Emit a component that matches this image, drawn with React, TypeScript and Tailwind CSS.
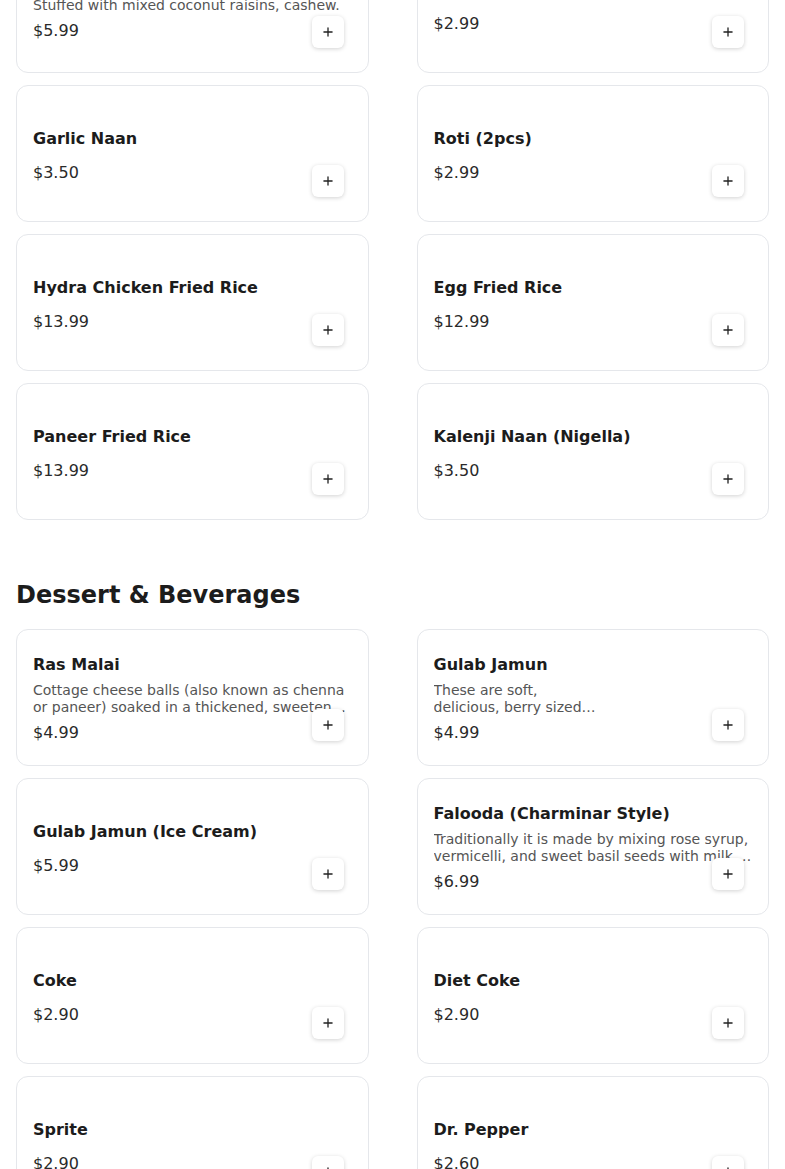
import { Plus } from "lucide-react";

type Item = { name: string; price: string; desc?: string };

const breads: Item[] = [
  { name: "Peshawari Naan", price: "$5.99", desc: "Stuffed with mixed coconut raisins, cashew." },
  { name: "Butter Naan", price: "$2.99" },
  { name: "Garlic Naan", price: "$3.50" },
  { name: "Roti (2pcs)", price: "$2.99" },
  { name: "Hydra Chicken Fried Rice", price: "$13.99" },
  { name: "Egg Fried Rice", price: "$12.99" },
  { name: "Paneer Fried Rice", price: "$13.99" },
  { name: "Kalenji Naan (Nigella)", price: "$3.50" },
];

const desserts: Item[] = [
  {
    name: "Ras Malai",
    price: "$4.99",
    desc: "Cottage cheese balls (also known as chenna or paneer) soaked in a thickened, sweetened and flavored milk called rabri.",
  },
  {
    name: "Gulab Jamun",
    price: "$4.99",
    desc: "These are soft,\ndelicious, berry sized balls\u00a0made\u00a0of\u00a0milk\u00a0solids\u00a0and\u00a0flour\u00a0soaked\u00a0in\u00a0syrup",
  },
  { name: "Gulab Jamun (Ice Cream)", price: "$5.99" },
  {
    name: "Falooda (Charminar Style)",
    price: "$6.99",
    desc: "Traditionally it is made by mixing rose syrup, vermicelli, and sweet basil seeds with milk, often served with ice cream.",
  },
  { name: "Coke", price: "$2.90" },
  { name: "Diet Coke", price: "$2.90" },
  { name: "Sprite", price: "$2.90" },
  { name: "Dr. Pepper", price: "$2.60" },
];

function MenuCard({ item }: { item: Item }) {
  return (
    <div
      className={`relative h-[137px] rounded-xl border border-gray-200 bg-white px-4 flex flex-col justify-center ${
        item.desc ? "pt-[2px]" : "pt-1"
      }`}
    >
      <h3 className="text-base font-bold leading-7 text-[#1c1c1c]">{item.name}</h3>
      {item.desc ? (
        <>
          <p className="mt-[3px] text-sm leading-[17px] text-[#555] line-clamp-2 whitespace-pre-line">{item.desc}</p>
          <p className="mt-[3px] text-base leading-7 text-[#2a2a2a]">{item.price}</p>
        </>
      ) : (
        <p className="mt-1.5 text-base leading-7 text-[#2a2a2a]">{item.price}</p>
      )}
      <button className="absolute bottom-6 right-6 w-8 h-8 flex items-center justify-center rounded-md bg-white shadow-[0_1px_4px_rgba(0,0,0,0.18)] text-[#222]">
        <Plus size={14} strokeWidth={2.25} />
      </button>
    </div>
  );
}

export default function App() {
  return (
    <div className="h-[1169px] overflow-hidden bg-white font-['DejaVu_Sans',sans-serif]">
      <div className="-mt-[64px] px-4">
        <section>
          <div className="grid grid-cols-2 gap-x-12 gap-y-3">
            {breads.map((it) => (
              <MenuCard key={it.name} item={it} />
            ))}
          </div>
        </section>

        <section className="mt-[59px]">
          <h2 className="text-2xl font-bold leading-8 text-[#1c1c1c] mb-[18px]">Dessert &amp; Beverages</h2>
          <div className="grid grid-cols-2 gap-x-12 gap-y-3">
            {desserts.map((it) => (
              <MenuCard key={it.name} item={it} />
            ))}
          </div>
        </section>
      </div>
    </div>
  );
}
